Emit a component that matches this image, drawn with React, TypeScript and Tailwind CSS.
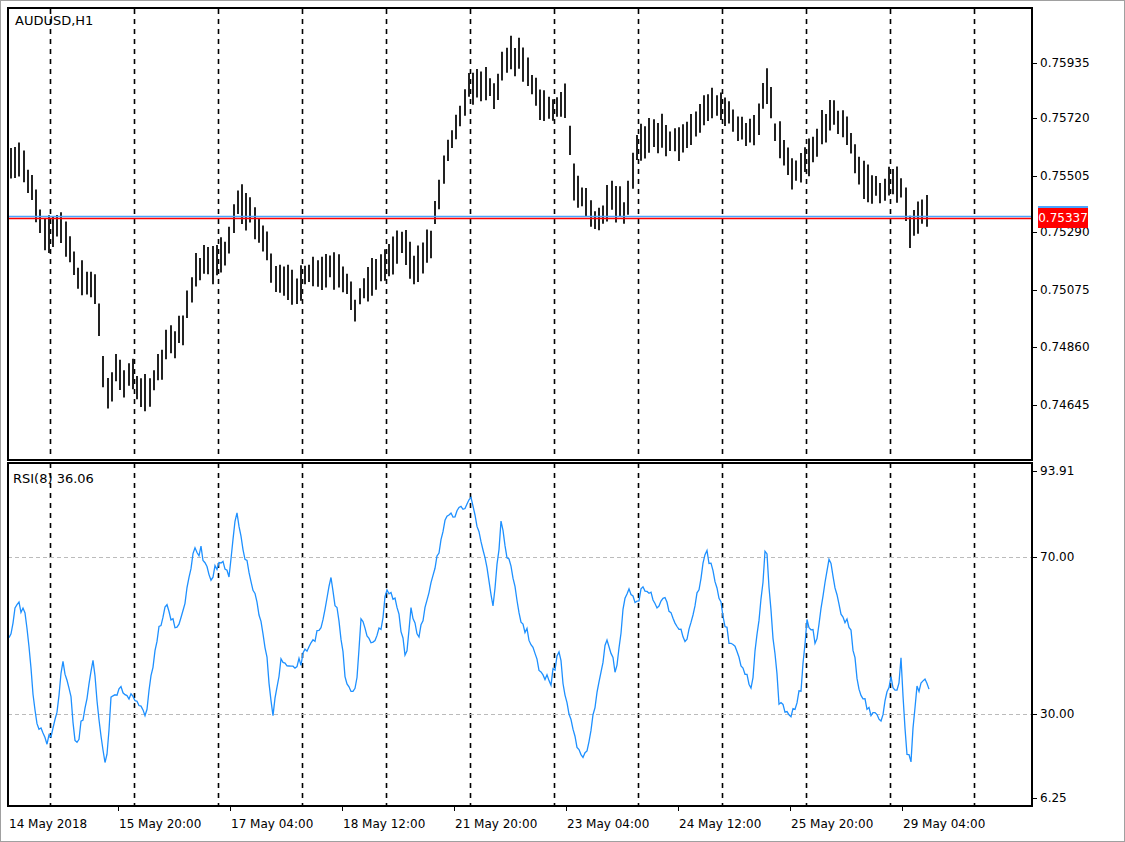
import React from "react";

const font = { fontFamily: "Tahoma, 'DejaVu Sans', 'Liberation Sans', sans-serif" };

const priceKeys: [number, number][] = [
  [10, 170], [20, 158], [35, 200], [45, 235], [60, 222], [75, 270], [95, 290], [105, 395], [115, 370], [130, 380],
  [150, 392], [165, 350], [180, 330], [195, 272], [215, 258], [225, 252], [237, 200], [250, 215], [265, 240],
  [275, 282], [290, 285], [310, 275], [330, 268], [345, 282], [355, 305], [365, 282], [385, 262], [400, 238],
  [415, 272], [430, 238], [445, 150], [460, 110], [470, 85], [485, 80], [495, 95], [505, 52], [520, 55],
  [530, 80], [540, 105], [555, 108], [565, 100], [572, 180], [585, 200], [595, 225], [610, 200], [625, 215],
  [635, 150], [650, 130], [665, 135], [680, 140], [695, 125], [710, 100], [725, 110], [740, 130], [755, 132],
  [765, 78], [775, 130], [790, 172], [805, 160], [815, 145], [830, 108], [845, 130], [860, 175], [875, 190],
  [890, 185], [900, 180], [908, 232], [920, 215], [928, 205],
];

const rsiKeys: [number, number][] = [
  [8, 640], [15, 600], [25, 615], [35, 720], [45, 742], [55, 720], [62, 660], [70, 700], [75, 750], [85, 700],
  [92, 656], [100, 740], [105, 772], [110, 700], [120, 688], [135, 700], [145, 712], [155, 640], [165, 600],
  [175, 630], [185, 598], [192, 552], [200, 550], [210, 575], [220, 560], [228, 578], [235, 512], [245, 560],
  [255, 600], [265, 650], [272, 714], [280, 660], [290, 670], [300, 660], [310, 640], [320, 630], [330, 580],
  [338, 620], [345, 680], [355, 692], [360, 620], [370, 640], [380, 630], [385, 585], [395, 600], [405, 660],
  [410, 610], [418, 640], [425, 600], [435, 560], [445, 520], [460, 510], [470, 492], [478, 535], [485, 560],
  [492, 605], [500, 525], [510, 570], [520, 620], [530, 640], [540, 675], [550, 680], [558, 650], [565, 700],
  [575, 740], [585, 758], [595, 700], [605, 640], [615, 670], [625, 588], [635, 600], [645, 585], [655, 605],
  [665, 600], [675, 620], [685, 640], [695, 600], [705, 550], [715, 580], [720, 605], [728, 640], [740, 660],
  [750, 690], [760, 600], [765, 542], [770, 610], [778, 700], [790, 714], [800, 690], [806, 620], [815, 640],
  [828, 555], [840, 610], [850, 630], [858, 690], [870, 715], [880, 718], [890, 680], [897, 690], [900, 652],
  [905, 750], [910, 756], [915, 690], [922, 680], [928, 688],
];

function interp(keys: [number, number][], x: number) {
  for (let i = 1; i < keys.length; i++) {
    if (x <= keys[i][0]) {
      const [x0, y0] = keys[i - 1];
      const [x1, y1] = keys[i];
      return y0 + ((y1 - y0) * (x - x0)) / (x1 - x0);
    }
  }
  return keys[keys.length - 1][1];
}

let seed = 7;
function rnd() {
  seed = (seed * 16807) % 2147483647;
  return seed / 2147483647;
}

const bars: { x: number; hi: number; lo: number }[] = [];
for (let x = 10; x <= 928; x += 4.2) {
  const m = interp(priceKeys, x) + (rnd() - 0.5) * 8;
  bars.push({ x: Math.round(x), hi: m - 8 - rnd() * 12, lo: m + 8 + rnd() * 12 });
}

const rsiPts: string[] = [];
for (let x = 8; x <= 928; x += 2) {
  const y = interp(rsiKeys, x) + (rnd() - 0.5) * 10;
  rsiPts.push(`${x},${Math.min(775, Math.max(490, y)).toFixed(1)}`);
}

const vlines = [49, 133, 217, 301, 385, 469, 553, 637, 721, 805, 889, 973];
const priceLabels: [string, number][] = [
  ["0.75935", 62], ["0.75720", 117], ["0.75505", 175], ["0.75290", 231], ["0.75075", 289], ["0.74860", 346], ["0.74645", 404],
];
const rsiLabels: [string, number][] = [["93.91", 470], ["70.00", 556], ["30.00", 713], ["6.25", 797]];
const timeLabels: [string, number][] = [
  ["14 May 2018", 8], ["15 May 20:00", 118], ["17 May 04:00", 230], ["18 May 12:00", 342], ["21 May 20:00", 454],
  ["23 May 04:00", 566], ["24 May 12:00", 678], ["25 May 20:00", 790], ["29 May 04:00", 902],
];

function Grid({ y0, y1 }: { y0: number; y1: number }) {
  return (
    <>
      {vlines.map((x) => (
        <line key={x} x1={x + 0.5} x2={x + 0.5} y1={y0} y2={y1} stroke="#000" strokeWidth={1.6} strokeDasharray="5 5" />
      ))}
    </>
  );
}

function Axis({ labels, top }: { labels: [string, number][]; top: number }) {
  return (
    <div className="relative flex-1">
      {labels.map(([t, y]) => (
        <div key={t} className="absolute left-0 flex items-center text-[12px] text-black" style={{ top: y - top - 9 }}>
          <span className="mr-[3px] h-px w-[4px] bg-black" />
          {t}
        </div>
      ))}
    </div>
  );
}

export default function App() {
  return (
    <div className="h-[842px] w-[1125px] overflow-hidden border border-[#a0a0a0] bg-white pl-[6px] pt-[6px]" style={font}>
      <div className="flex h-[454px]">
        <svg width={1026} height={454} viewBox="6 6 1026 454" className="shrink-0">
          <Grid y0={8} y1={458} />
          {bars.map((b, i) => (
            <line key={i} x1={b.x} x2={b.x} y1={b.hi} y2={b.lo} stroke="#222" strokeWidth={2} />
          ))}
          <line x1={7} x2={1031} y1={215.5} y2={215.5} stroke="#4aa3ff" strokeWidth={1.5} />
          <line x1={7} x2={1031} y1={217.5} y2={217.5} stroke="#ff0000" strokeWidth={1.5} />
          <text x={14} y={24} fontSize={13} fill="#000">AUDUSD,H1</text>
          <rect x={7} y={7} width={1024} height={452} fill="none" stroke="#000" strokeWidth={2} />
        </svg>
        <div className="relative flex flex-1">
          <Axis labels={priceLabels} top={6} />
          <div className="absolute left-[5px] top-[199px] h-[2px] w-[50px] bg-[#4aa3ff]" />
          <div className="absolute left-[5px] top-[201px] flex h-[20px] w-[50px] items-center justify-center bg-[#ff0000] text-[12px] text-white">
            0.75337
          </div>
        </div>
      </div>
      <div className="flex h-[346px]">
        <svg width={1026} height={346} viewBox="6 460 1026 346" className="shrink-0">
          <Grid y0={462} y1={805} />
          <line x1={7} x2={1031} y1={556.5} y2={556.5} stroke="#bbb" strokeDasharray="4 3" />
          <line x1={7} x2={1031} y1={713.5} y2={713.5} stroke="#bbb" strokeDasharray="4 3" />
          <polyline points={rsiPts.join(" ")} fill="none" stroke="#1e90ff" strokeWidth={1.3} />
          <text x={12} y={482} fontSize={13} fill="#000">RSI(8) 36.06</text>
          <rect x={7} y={462} width={1024} height={343} fill="none" stroke="#000" strokeWidth={2} />
        </svg>
        <Axis labels={rsiLabels} top={460} />
      </div>
      <div className="relative h-[30px]">
        {timeLabels.map(([t, x]) => (
          <div key={t} className="absolute top-0 text-[12px] text-black" style={{ left: x - 6 }}>
            {x > 10 && <span className="absolute -left-[1px] -top-px h-[5px] w-px bg-black" />}
            <span className="block pt-[8px]">{t}</span>
          </div>
        ))}
      </div>
    </div>
  );
}
